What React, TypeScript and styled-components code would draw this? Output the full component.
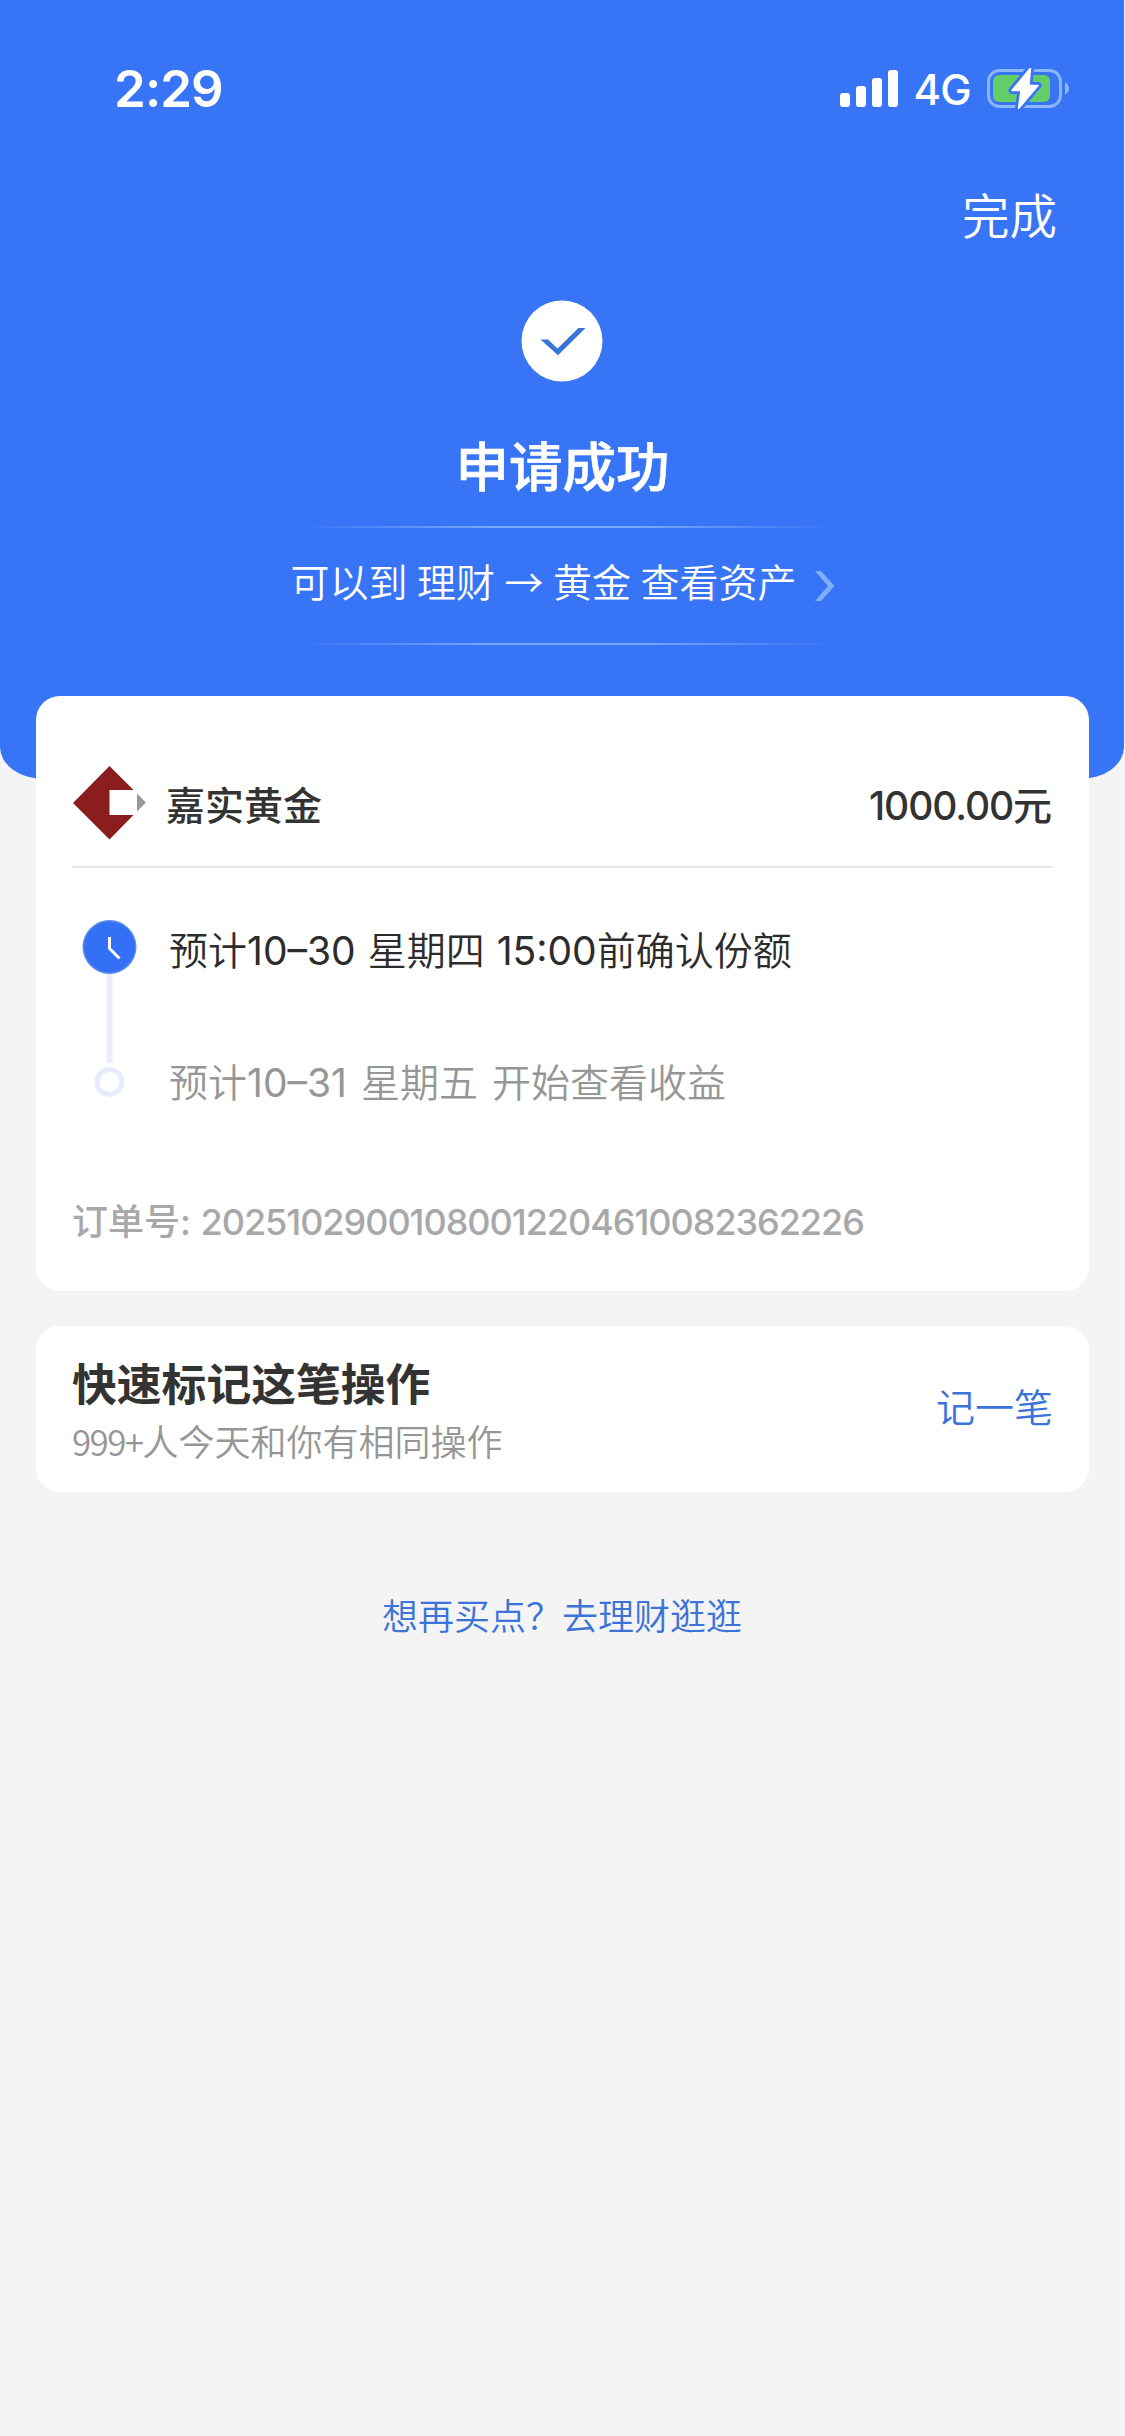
import React from "react";
import styled, { createGlobalStyle } from "styled-components";

const GlobalStyle = createGlobalStyle`
  html, body { margin: 0; padding: 0; background: #f4f4f4; }
  *, *::before, *::after { box-sizing: border-box; }
`;

const Page = styled.main`
  width: 1125px;
  min-height: 2436px;
  background: #f4f4f4;
  font-family: Inter, "Noto Sans CJK SC", sans-serif;
  color: #333;
  white-space: nowrap;
`;

const Header = styled.header`
  height: 779px;
  margin-right: 1px;
  background: #3875f6;
  border-radius: 0 0 44px 44px / 0 0 32px 32px;
  color: #fff;
  display: flex;
  flex-direction: column;
`;

const StatusBar = styled.div`
  height: 132px;
  padding: 46px 55px 0 114px;
  display: flex;
  justify-content: space-between;
  align-items: flex-start;
`;

const Clock = styled.time`
  font-size: 51px;
  line-height: 86px;
  font-weight: 600;
  letter-spacing: -0.9px;
`;

const StatusIcons = styled.div`
  display: flex;
  align-items: center;
  height: 86px;
`;

const Network = styled.span`
  margin: 2px 16px 0 15px;
  font-size: 42px;
  line-height: 50px;
  font-weight: 450;
  letter-spacing: -0.7px;
`;

const NavBar = styled.nav`
  height: 168px;
  padding: 50px 67px 0 0;
  display: flex;
  justify-content: flex-end;
`;

const DoneButton = styled.a`
  font-size: 47.5px;
  line-height: 70px;
  height: 70px;
  font-weight: 350;
`;

const Result = styled.section`
  display: flex;
  flex-direction: column;
  align-items: center;
`;

const ResultTitle = styled.h1`
  margin: 46px 0 0;
  padding-left: 1px;
  font-size: 53.5px;
  line-height: 80px;
  font-weight: 500;
  height: 98px;
  -webkit-text-stroke: 0.6px #fff;
`;

const GlowLine = styled.div`
  width: 530px;
  height: 2px;
  margin-left: 8px;
  background: linear-gradient(
    90deg,
    rgba(150, 195, 255, 0),
    rgba(150, 195, 255, 0.65) 35%,
    rgba(150, 195, 255, 0.65) 65%,
    rgba(150, 195, 255, 0)
  );
`;

const AssetLink = styled.a`
  height: 115px;
  padding: 0 0 11px 1px;
  display: flex;
  align-items: center;
  gap: 17px;
  font-family: "Noto Sans CJK SC", sans-serif;
  font-size: 39px;
  line-height: 56px;
  font-weight: 350;
  word-spacing: 0.8px;

  svg { margin-top: 12px; }
`;

const Card = styled.section`
  margin: 0 36px;
  background: #fff;
  border-radius: 24px;
`;

const OrderCard = styled(Card)`
  position: relative;
  height: 595px;
  margin-top: -83px;
  padding: 0 36px;
`;

const ProductRow = styled.div`
  height: 172px;
  padding-top: 44px;
  border-bottom: 2px solid #e8e8e8;
  display: flex;
  align-items: center;
`;

const ProductName = styled.span`
  margin: 6px 0 0 19px;
  font-size: 39px;
  line-height: 60px;
  font-weight: 500;
`;

const Amount = styled.span`
  margin: 6px 2px 0 auto;
  font-size: 39px;
  line-height: 60px;
  font-weight: 500;
  letter-spacing: -1.1px;
`;

const Timeline = styled.div`
  height: 276px;
  padding: 52px 0 0 10px;
  display: flex;
  gap: 31px;
`;

const Steps = styled.div`
  display: flex;
  flex-direction: column;
  gap: 72px;
  padding-top: 1px;
`;

const Step = styled.span<{ $muted?: boolean }>`
  font-size: 39px;
  line-height: 60px;
  font-weight: 350;
  word-spacing: ${(p) => (p.$muted ? "3px" : "1px")};
  color: ${(p) => (p.$muted ? "#969696" : "#2c2c2c")};
`;

const Digits = styled.span`
  font-weight: 400;
`;

const OrderNumber = styled.div`
  margin-top: 50px;
  font-size: 36px;
  line-height: 56px;
  font-weight: 500;
  color: #a8a8aa;
`;

const OrderDigits = styled.span`
  font-weight: 450;
  letter-spacing: -1.03px;
`;

const NoteCard = styled(Card)`
  height: 166px;
  margin-top: 35px;
  padding: 0 36px;
  display: flex;
  justify-content: space-between;
  align-items: center;
`;

const NoteText = styled.div`
  padding-top: 2px;
`;

const NoteTitle = styled.h2`
  margin: 0;
  font-size: 44.8px;
  line-height: 60px;
  font-weight: 700;
`;

const NoteHint = styled.div`
  font-family: "Noto Sans CJK SC", sans-serif;
  font-size: 36px;
  line-height: 50px;
  font-weight: 350;
  color: #969696;
`;

const HintCount = styled.span`
  font-size: 35px;
  letter-spacing: -1.6px;
`;

const NoteAction = styled.a`
  padding-bottom: 3px;
  font-size: 39px;
  line-height: 60px;
  font-weight: 350;
  color: #3b73d8;
`;

const MoreLink = styled.a`
  display: block;
  margin-top: 98px;
  padding-right: 1px;
  text-align: center;
  font-size: 36px;
  line-height: 54px;
  font-weight: 350;
  color: #3b73d8;
`;

const SignalIcon = () => (
  <svg width="58" height="38" viewBox="0 0 58 38" fill="#fff">
    <rect x="0" y="23" width="10" height="14" rx="3" />
    <rect x="16" y="16" width="10" height="21" rx="3" />
    <rect x="32" y="8" width="10" height="29" rx="3" />
    <rect x="48" y="0" width="10" height="37" rx="3" />
  </svg>
);

const bolt = "M43.5 0L25 22.5H34L31.5 40.5L51 17.5H42Z";

const BatteryIcon = () => (
  <svg width="82" height="42" viewBox="0 0 82 42">
    <rect x="1.5" y="2.5" width="72" height="36" rx="11" fill="none" stroke="#8db5fb" strokeWidth="3" />
    <rect x="6" y="7" width="57" height="27" rx="6" fill="#65cd67" />
    <path d="M78 14.5c5.3 2 5.3 10 0 12z" fill="#8db5fb" />
    <path d={bolt} fill="#3875f6" stroke="#3875f6" strokeWidth="7" strokeLinejoin="round" />
    <path d={bolt} fill="#fff" stroke="#fff" strokeWidth="1.5" strokeLinejoin="round" />
  </svg>
);

const SuccessIcon = () => (
  <svg width="82" height="82" viewBox="0 0 82 82">
    <circle cx="41" cy="41" r="40.5" fill="#fff" />
    <path d="M19.5 39.5H27L36.500 48.500L57.500 28H64.500L37 55.300Z" fill="#3875d8" />
  </svg>
);

const Chevron = () => (
  <svg width="21" height="32" viewBox="0 0 21 32">
    <path d="M1 1H7L20.500 16L7 31H1L14 16Z" fill="#80affb" />
  </svg>
);

const FundLogo = () => (
  <svg width="75" height="74" viewBox="0 0 75 74">
    <path d="M37.500 0L61.500 24H37.500V49H61.500L37.500 73.500L1 37Z" fill="#8b1d1f" />
    <path d="M65 27.500L74 36.500L65 45.500Z" fill="#989898" />
  </svg>
);

const TimelineTrack = () => (
  <svg width="56" height="180" viewBox="0 0 56 180">
    <path d="M27.500 50V143" stroke="#e8eefc" strokeWidth="6" />
    <circle cx="27.5" cy="27" r="27" fill="#5b8ee8" />
    <circle cx="27.5" cy="27" r="25.5" fill="#3370f6" />
    <path d="M27.500 17V28.500L37.500 38.500" fill="none" stroke="#fff" strokeWidth="3" />
    <circle cx="27.5" cy="162" r="12.5" fill="#fff" stroke="#e6ecfa" strokeWidth="5" />
  </svg>
);

export default function App() {
  return (
    <Page>
      <GlobalStyle />
      <Header>
        <StatusBar>
          <Clock>2:29</Clock>
          <StatusIcons>
            <SignalIcon />
            <Network>4G</Network>
            <BatteryIcon />
          </StatusIcons>
        </StatusBar>
        <NavBar>
          <DoneButton>完成</DoneButton>
        </NavBar>
        <Result>
          <SuccessIcon />
          <ResultTitle>申请成功</ResultTitle>
          <GlowLine />
          <AssetLink>
            <span>可以到 理财 → 黄金 查看资产</span>
            <Chevron />
          </AssetLink>
          <GlowLine />
        </Result>
      </Header>
      <OrderCard>
        <ProductRow>
          <FundLogo />
          <ProductName>嘉实黄金</ProductName>
          <Amount>1000.00元</Amount>
        </ProductRow>
        <Timeline>
          <TimelineTrack />
          <Steps>
            <Step>
              预计<Digits>10–30</Digits> 星期四 <Digits>15:00</Digits>前确认份额
            </Step>
            <Step $muted>
              预计<Digits>10–31</Digits> 星期五 开始查看收益
            </Step>
          </Steps>
        </Timeline>
        <OrderNumber>
          订单号: <OrderDigits>20251029001080012204610082362226</OrderDigits>
        </OrderNumber>
      </OrderCard>
      <NoteCard>
        <NoteText>
          <NoteTitle>快速标记这笔操作</NoteTitle>
          <NoteHint>
            <HintCount>999+</HintCount>人今天和你有相同操作
          </NoteHint>
        </NoteText>
        <NoteAction>记一笔</NoteAction>
      </NoteCard>
      <MoreLink>想再买点？去理财逛逛</MoreLink>
    </Page>
  );
}
